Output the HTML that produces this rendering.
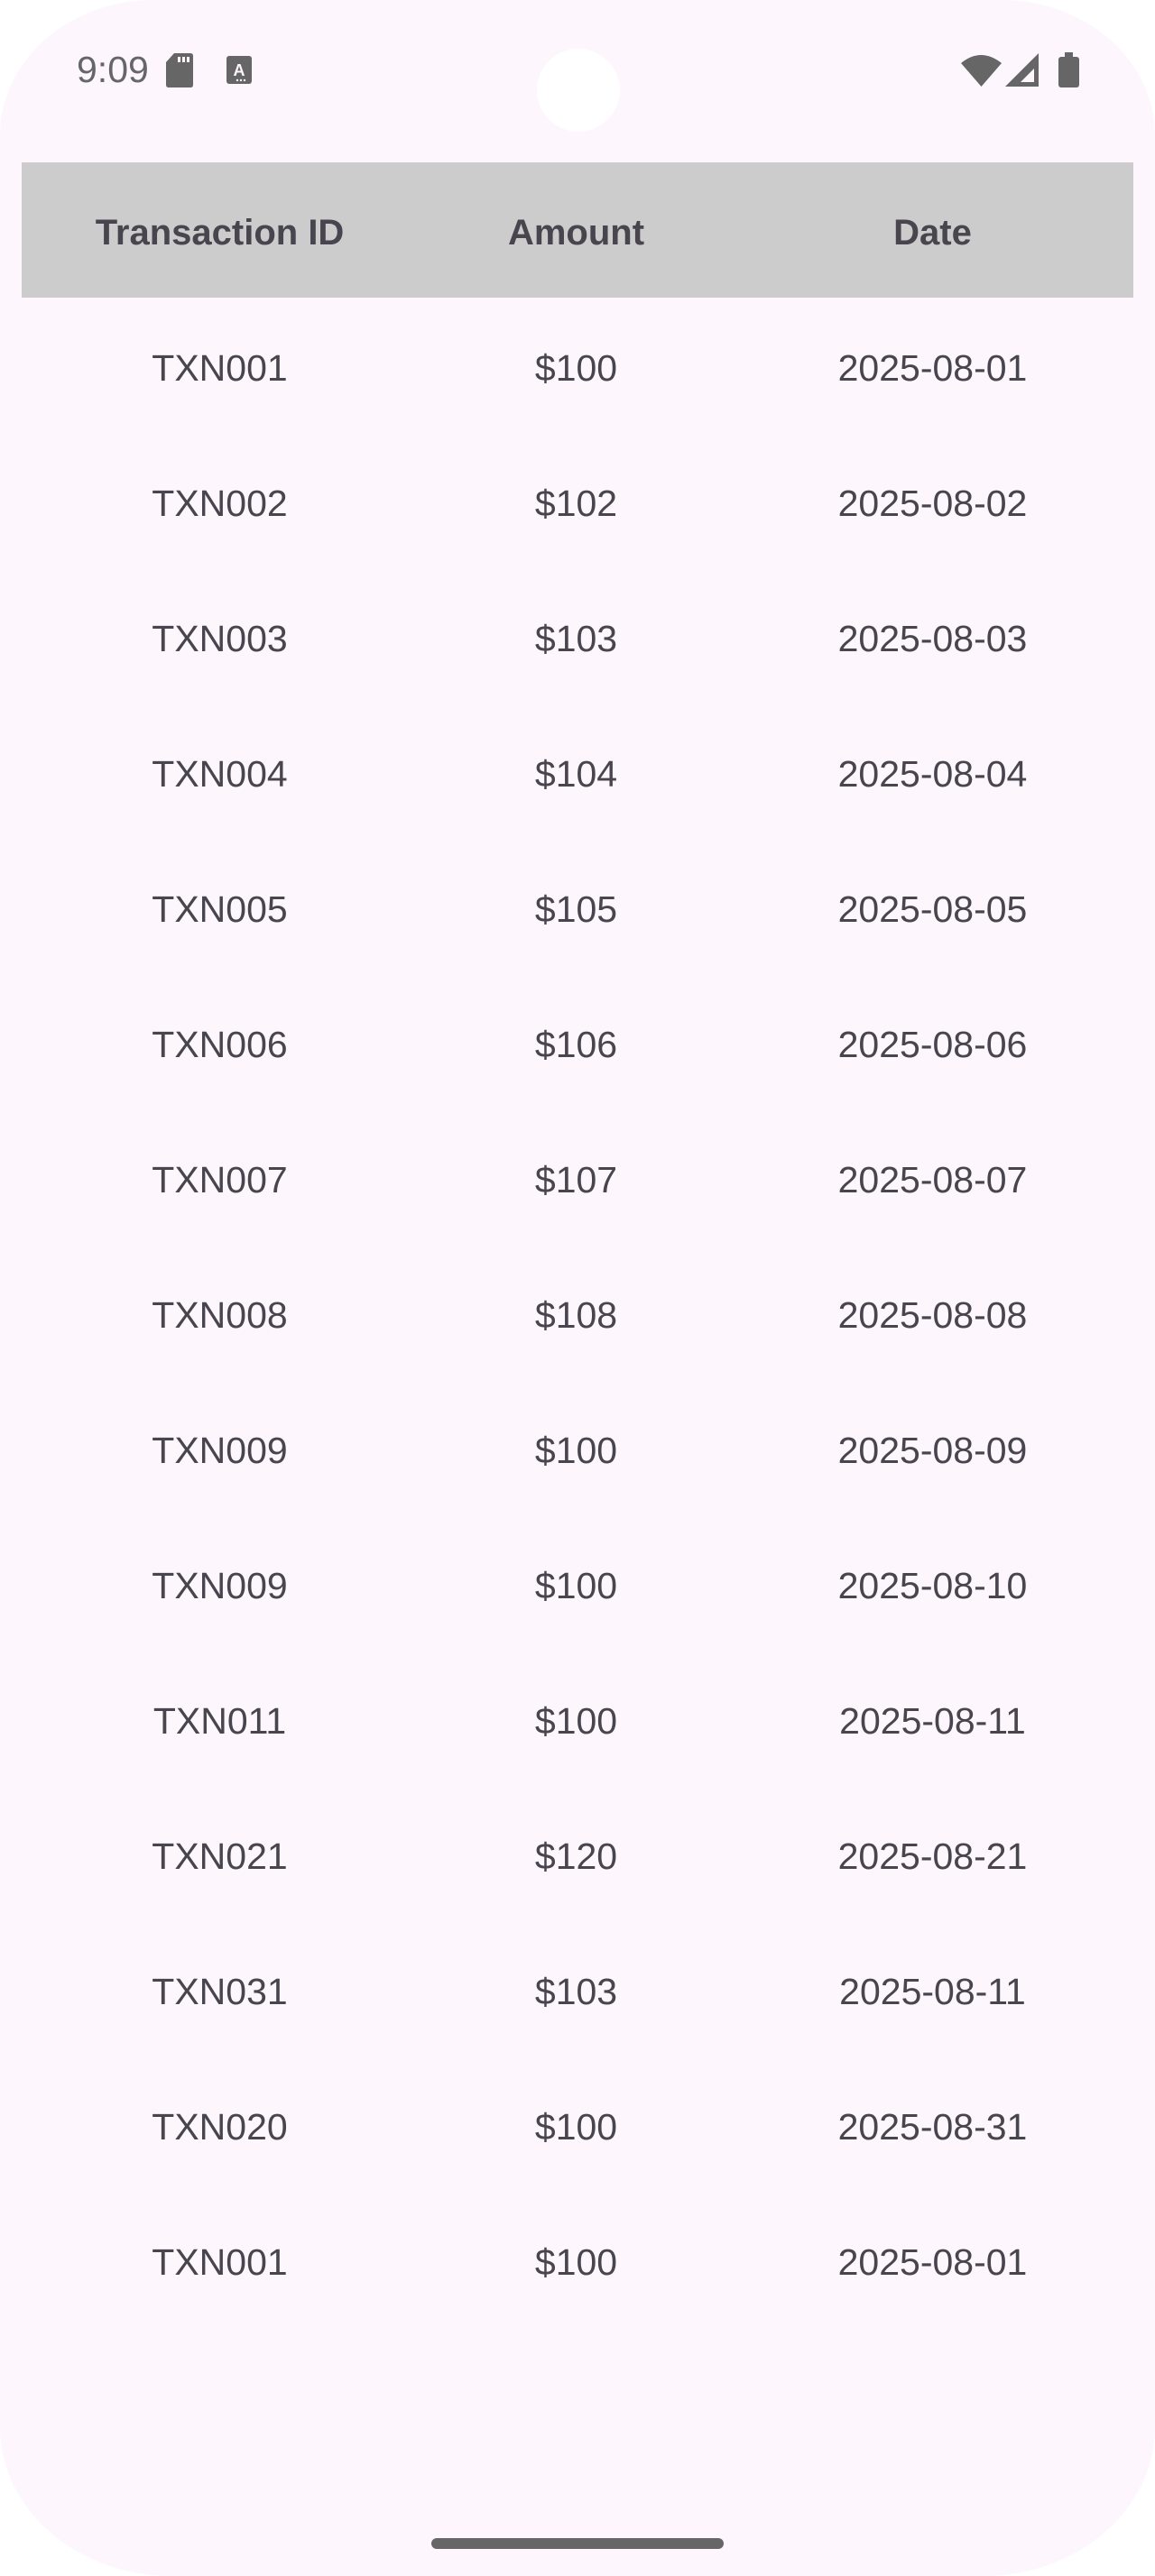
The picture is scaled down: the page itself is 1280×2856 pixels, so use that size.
<!DOCTYPE html>
<html><head><meta charset="utf-8"><style>
html,body{margin:0;padding:0;background:#fff;}
body{width:1280px;height:2856px;position:relative;overflow:hidden;font-family:"Liberation Sans",sans-serif;}
.screen{position:absolute;left:0;top:0;width:1280px;height:2856px;background:#fdf6fd;border-radius:170px 170px 190px 190px / 150px 150px 165px 165px;}
.time{position:absolute;left:85px;top:52px;font-size:41px;color:#666;line-height:50px;}
.cam{position:absolute;left:595px;top:54px;width:92px;height:92px;border-radius:50%;background:#fff;}
.hdr{position:absolute;left:24px;top:180px;width:1232px;height:150px;background:#cccccc;}
.row{position:absolute;left:46px;width:1185px;height:150px;display:flex;align-items:center;color:#49454f;padding-top:3px;}
.row div{width:395px;text-align:center;}
.h{font-weight:bold;font-size:40px;top:180px;}
.r{font-size:41px;}
.home{position:absolute;left:478px;top:2814px;width:324px;height:12px;border-radius:6px;background:#666;}
</style></head><body>
<div class="screen"></div>
<div class="time">9:09</div>
<svg style="position:absolute;left:184px;top:59px" width="30" height="38" viewBox="0 0 30 38"><path d="M9 0H27Q30 0 30 3V35Q30 38 27 38H3Q0 38 0 35V10Z" fill="#666"/><rect x="13" y="4" width="3" height="6" fill="#fdf6fd"/><rect x="18" y="4" width="3" height="6" fill="#fdf6fd"/><rect x="23" y="4" width="3" height="6" fill="#fdf6fd"/></svg>
<svg style="position:absolute;left:251px;top:62px" width="28" height="31" viewBox="0 0 28 31"><rect width="28" height="31" rx="3" fill="#666"/><text x="14" y="22" font-size="18" font-weight="bold" fill="#fdf6fd" text-anchor="middle" font-family="Liberation Sans">A</text><circle cx="12" cy="27" r="1.2" fill="#fdf6fd"/><circle cx="16" cy="27" r="1.2" fill="#fdf6fd"/><circle cx="20" cy="27" r="1.2" fill="#fdf6fd"/></svg>
<div class="cam"></div>
<svg style="position:absolute;left:1065px;top:58px" width="132" height="40" viewBox="0 0 132 40"><path d="M0 12Q22 -6 45 12L22.5 38Z" fill="#666"/><path d="M49 38L86 1V38Z" fill="#666"/><path d="M66 33L81 18V33Z" fill="#fdf6fd"/><rect x="108" y="5" width="23" height="34" rx="3" fill="#666"/><rect x="115" y="0" width="9" height="6" fill="#666"/></svg>
<div class="hdr"></div>
<div class="row h"><div>Transaction ID</div><div>Amount</div><div>Date</div></div>
<div class="row r" style="top:330px"><div>TXN001</div><div>$100</div><div>2025-08-01</div></div>
<div class="row r" style="top:480px"><div>TXN002</div><div>$102</div><div>2025-08-02</div></div>
<div class="row r" style="top:630px"><div>TXN003</div><div>$103</div><div>2025-08-03</div></div>
<div class="row r" style="top:780px"><div>TXN004</div><div>$104</div><div>2025-08-04</div></div>
<div class="row r" style="top:930px"><div>TXN005</div><div>$105</div><div>2025-08-05</div></div>
<div class="row r" style="top:1080px"><div>TXN006</div><div>$106</div><div>2025-08-06</div></div>
<div class="row r" style="top:1230px"><div>TXN007</div><div>$107</div><div>2025-08-07</div></div>
<div class="row r" style="top:1380px"><div>TXN008</div><div>$108</div><div>2025-08-08</div></div>
<div class="row r" style="top:1530px"><div>TXN009</div><div>$100</div><div>2025-08-09</div></div>
<div class="row r" style="top:1680px"><div>TXN009</div><div>$100</div><div>2025-08-10</div></div>
<div class="row r" style="top:1830px"><div>TXN011</div><div>$100</div><div>2025-08-11</div></div>
<div class="row r" style="top:1980px"><div>TXN021</div><div>$120</div><div>2025-08-21</div></div>
<div class="row r" style="top:2130px"><div>TXN031</div><div>$103</div><div>2025-08-11</div></div>
<div class="row r" style="top:2280px"><div>TXN020</div><div>$100</div><div>2025-08-31</div></div>
<div class="row r" style="top:2430px"><div>TXN001</div><div>$100</div><div>2025-08-01</div></div>
<div class="home"></div>
</body></html>
